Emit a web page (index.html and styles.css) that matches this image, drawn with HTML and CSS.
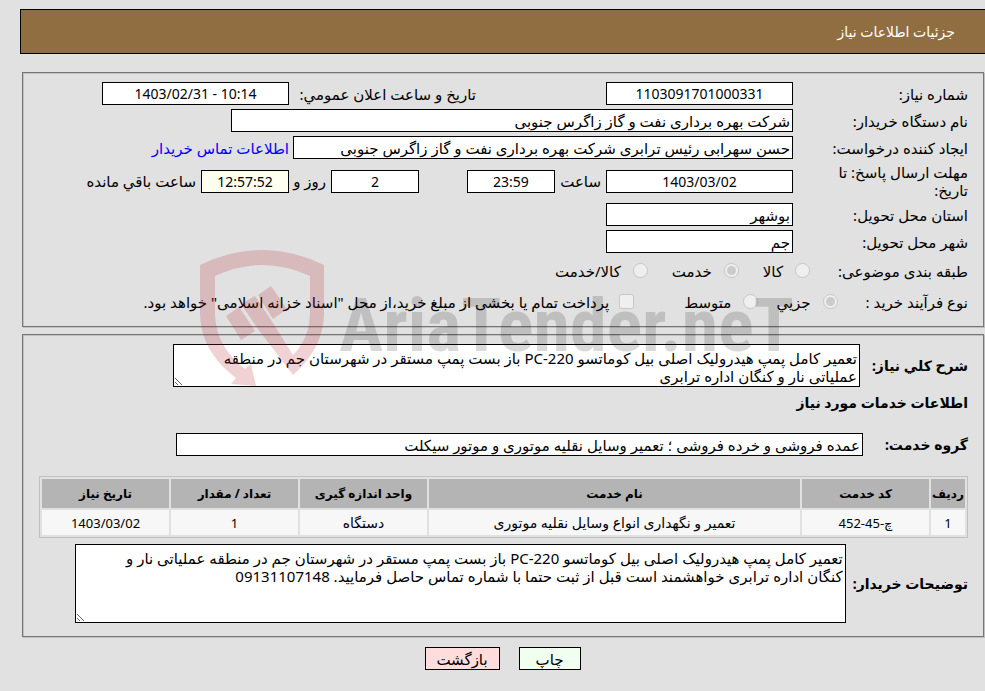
FILE: index.html
```html
<!DOCTYPE html>
<html lang="fa" dir="rtl">
<head>
    <meta charset="UTF-8">
    <meta name="viewport" content="width=device-width, initial-scale=1.0">
    <title>جزئیات اطلاعات نیاز</title>
    <link rel="stylesheet" href="styles.css">
</head>
<body>
    <header class="header">جزئیات اطلاعات نیاز</header>

    <main>
        <fieldset class="box">
            <div class="row">
                <label class="title" for="number">شماره نیاز:</label>
                <input id="number" class="medium center" value="1103091701000331" readonly>
                <label class="announce" for="announce">تاریخ و ساعت اعلان عمومي:</label>
                <input id="announce" class="medium center" value="1403/02/31 - 10:14" dir="ltr" readonly>
            </div>
            <div class="row">
                <label class="title" for="buyer">نام دستگاه خریدار:</label>
                <input id="buyer" class="buyer" value="شرکت بهره برداری نفت و گاز زاگرس جنوبی" readonly>
            </div>
            <div class="row">
                <label class="title" for="creator">ایجاد کننده درخواست:</label>
                <input id="creator" class="creator" value="حسن سهرابی رئیس ترابری شرکت بهره برداری نفت و گاز زاگرس جنوبی" readonly>
                <a href="#">اطلاعات تماس خریدار</a>
            </div>
            <div class="row deadline">
                <label class="title" for="deadline">مهلت ارسال پاسخ: تا تاریخ:</label>
                <input id="deadline" class="medium center" value="1403/03/02" readonly>
                <label class="hour-label" for="hour">ساعت</label>
                <input id="hour" class="small center" value="23:59" readonly>
                <input id="days" class="small center days" value="2" readonly>
                <label class="days-label" for="days">روز و</label>
                <input id="remain" class="small center remain" value="12:57:52" readonly>
                <label for="remain">ساعت باقي مانده</label>
            </div>
            <div class="row">
                <label class="title" for="province">استان محل تحویل:</label>
                <input id="province" class="medium" value="بوشهر" readonly>
            </div>
            <div class="row">
                <label class="title" for="city">شهر محل تحویل:</label>
                <input id="city" class="medium" value="جم" readonly>
            </div>
            <div class="row options">
                <span class="name">طبقه بندی موضوعی:</span>
                <label><input type="radio" name="subject" disabled> کالا</label>
                <label><input type="radio" name="subject" checked disabled> خدمت</label>
                <label><input type="radio" name="subject" disabled> کالا/خدمت</label>
            </div>
            <div class="row options process">
                <span class="name">نوع فرآیند خرید :</span>
                <label><input type="radio" name="process" checked disabled> جزیي</label>
                <label><input type="radio" name="process" disabled> متوسط</label>
                <label class="treasury"><input type="checkbox" disabled> پرداخت تمام یا بخشی از مبلغ خرید،از محل "اسناد خزانه اسلامی" خواهد بود.</label>
            </div>
        </fieldset>

        <fieldset class="box details">
            <div class="row">
                <label class="strong wide" for="summary">شرح کلي نیاز:</label>
                <textarea id="summary" class="summary" readonly>تعمیر کامل پمپ هیدرولیک اصلی بیل کوماتسو PC-220 باز بست پمپ مستقر در شهرستان جم در منطقه عملیاتی نار و کنگان اداره ترابری</textarea>
            </div>
            <h2>اطلاعات خدمات مورد نیاز</h2>
            <div class="row group">
                <label class="strong wide" for="group">گروه خدمت:</label>
                <input id="group" value="عمده فروشی و خرده فروشی ؛ تعمیر وسایل نقلیه موتوری و موتور سیکلت" readonly>
            </div>
            <table>
                <thead>
                    <tr>
                        <th class="col-row">ردیف</th>
                        <th class="col">کد خدمت</th>
                        <th>نام خدمت</th>
                        <th class="col">واحد اندازه گیری</th>
                        <th class="col">تعداد / مقدار</th>
                        <th class="col">تاریخ نیاز</th>
                    </tr>
                </thead>
                <tbody>
                    <tr>
                        <td>1</td>
                        <td>چ-45-452</td>
                        <td class="service">تعمیر و نگهداری انواع وسایل نقلیه موتوری</td>
                        <td class="service">دستگاه</td>
                        <td>1</td>
                        <td>1403/03/02</td>
                    </tr>
                </tbody>
            </table>
            <div class="row">
                <label class="strong notes-label" for="notes">توضیحات خریدار:</label>
                <textarea id="notes" class="notes" readonly>تعمیر کامل پمپ هیدرولیک اصلی بیل کوماتسو PC-220 باز بست پمپ مستقر در شهرستان جم در منطقه عملیاتی نار و کنگان اداره ترابری خواهشمند است قبل از ثبت حتما با شماره تماس حاصل فرمایید. 09131107148</textarea>
            </div>
        </fieldset>

        <!-- site watermark -->
        <svg class="watermark" viewBox="0 0 610 140" direction="ltr" aria-hidden="true">
            <g fill="#b41e28" fill-opacity="0.2">
                <path d="M0 15Q62 -15 124 15V62C124 88 112 108 93 125L58 79L41 54L55 46L71 70L93 105C104 94 110 80 110 62V26Q62 4 15 26V62C15 86 26 104 45 119L51 114L56 136L31 134L36 128C12 110 0 88 0 62Z"/>
                <path d="M26 66L39 57L55 81L41 90Z"/>
                <path d="M58 45L71 36L87 59L73 69Z"/>
            </g>
            <text class="logo-text" x="139" y="101">AriaTender.neT</text>
        </svg>
    </main>

    <footer class="buttons">
        <button type="button" class="print">چاپ</button>
        <button type="button" class="back">بازگشت</button>
    </footer>
</body>
</html>
```

FILE: styles.css
```css
* {
    box-sizing: border-box;
}
body {
    margin: 0;
    padding-top: 9px;
    background-color: #e1e1e1;
    color: #000;
    font-family: "Noto Sans", "DejaVu Sans", sans-serif;
    font-size: 15px;
    line-height: 18px;
}
input,
textarea,
button {
    font: inherit;
    color: inherit;
    margin: 0;
}
.header {
    height: 45px;
    margin-left: 20px;
    padding: 13px 30px;
    border: 1px solid #000;
    border-right: 0;
    background-color: #906e41;
    color: #fff;
    font-size: 14px;
}
main {
    position: relative;
    margin: 18px 0 0 22px;
}
.box {
    display: flex;
    flex-direction: column;
    gap: 4px;
    min-width: 0;
    margin: 0 1px 7px 0;
    padding: 9px 15px 11px 16px;
    border: 1px solid #767676;
    box-shadow: inset 1px 1px #c0c0c0, 1px 1px #c0c0c0;
}
.row {
    display: flex;
    align-items: center;
}
.title {
    flex: 0 0 175px;
    padding-left: 35px;
}
.row input:not([type]),
textarea {
    height: 23px;
    padding: 1px 2px;
    border: 1px solid #000;
    background-color: #fff;
}
.row .medium {
    width: 187px;
}
.row .small {
    width: 88px;
    margin: 0 5px;
}
.row .center {
    font-size: 14px;
    text-align: center;
}
.announce {
    width: 187px;
    margin-right: 130px;
}
.row .buyer {
    flex: 1;
    margin-left: 192px;
}
.row .creator {
    flex: 1;
    margin-left: 4px;
}
.row a {
    flex: 0 0 250px;
    color: #0000ff;
    text-decoration: none;
}
.deadline label {
    white-space: nowrap;
}
.deadline .title {
    white-space: normal;
}
.hour-label {
    width: 41px;
    margin-right: 5px;
}
.deadline .days {
    margin-right: 43px;
}
.days-label {
    width: 32px;
}
.row input.remain {
    background-color: #fffff0;
}
.options {
    min-height: 27px;
}
.options label {
    display: flex;
    align-items: center;
    gap: 12px;
    margin-left: 24px;
}
.options .name {
    margin-left: 28px;
}
.options input {
    width: 15px;
    height: 15px;
}
.process label {
    margin-left: 18px;
}
.options .treasury {
    gap: 10px;
    margin-right: 32px;
}
.strong {
    margin-left: 5px;
    font-size: 14px;
    font-weight: bold;
    white-space: nowrap;
}
.wide {
    flex: 0 0 103px;
}
textarea {
    padding: 4px 2px;
    resize: both;
    overflow: hidden;
}
.summary {
    flex: 0 1 687px;
    height: 43px;
}
.details {
    padding-bottom: 13px;
}
h2 {
    margin: 3px 0;
    font-size: 14px;
    line-height: 18px;
}
.group {
    margin: 14px 0 16px;
}
.group .strong {
    flex-basis: 100px;
}
.group input {
    flex: 0 1 687px;
}
table {
    width: 100%;
    margin-bottom: 2px;
    table-layout: fixed;
    border: 1px solid #c0c0c0;
    border-spacing: 2px;
    font-size: 13px;
    text-align: center;
}
th {
    height: 29px;
    padding: 0;
    background-color: #b4b4b4;
    font-size: 12px;
}
td {
    height: 25px;
    padding: 0;
    background-color: #f7f7f7;
}
.service {
    font-size: 14px;
}
.col-row {
    width: 34px;
}
.col {
    width: 127px;
}
.notes-label {
    margin-left: 7px;
}
.notes {
    flex: 0 1 771px;
    height: 79px;
    padding-left: 20px;
}
.watermark {
    position: absolute;
    top: 178px;
    left: 178px;
    width: 610px;
    height: 140px;
    pointer-events: none;
}
.logo-text {
    font-family: "Roboto Condensed", Roboto, sans-serif;
    font-size: 74px;
    font-weight: bold;
    fill: #000;
    fill-opacity: 0.15;
}
.buttons {
    display: flex;
    justify-content: center;
    gap: 19px;
    margin: 10px 0 0 20px;
    padding-bottom: 20px;
}
.buttons button {
    height: 23px;
    padding: 0 10px;
    border: 1px solid #000;
}
.buttons .print {
    width: 62px;
    background-color: #f0fff0;
}
.buttons .back {
    width: 75px;
    background-color: #ffdddd;
}
```
